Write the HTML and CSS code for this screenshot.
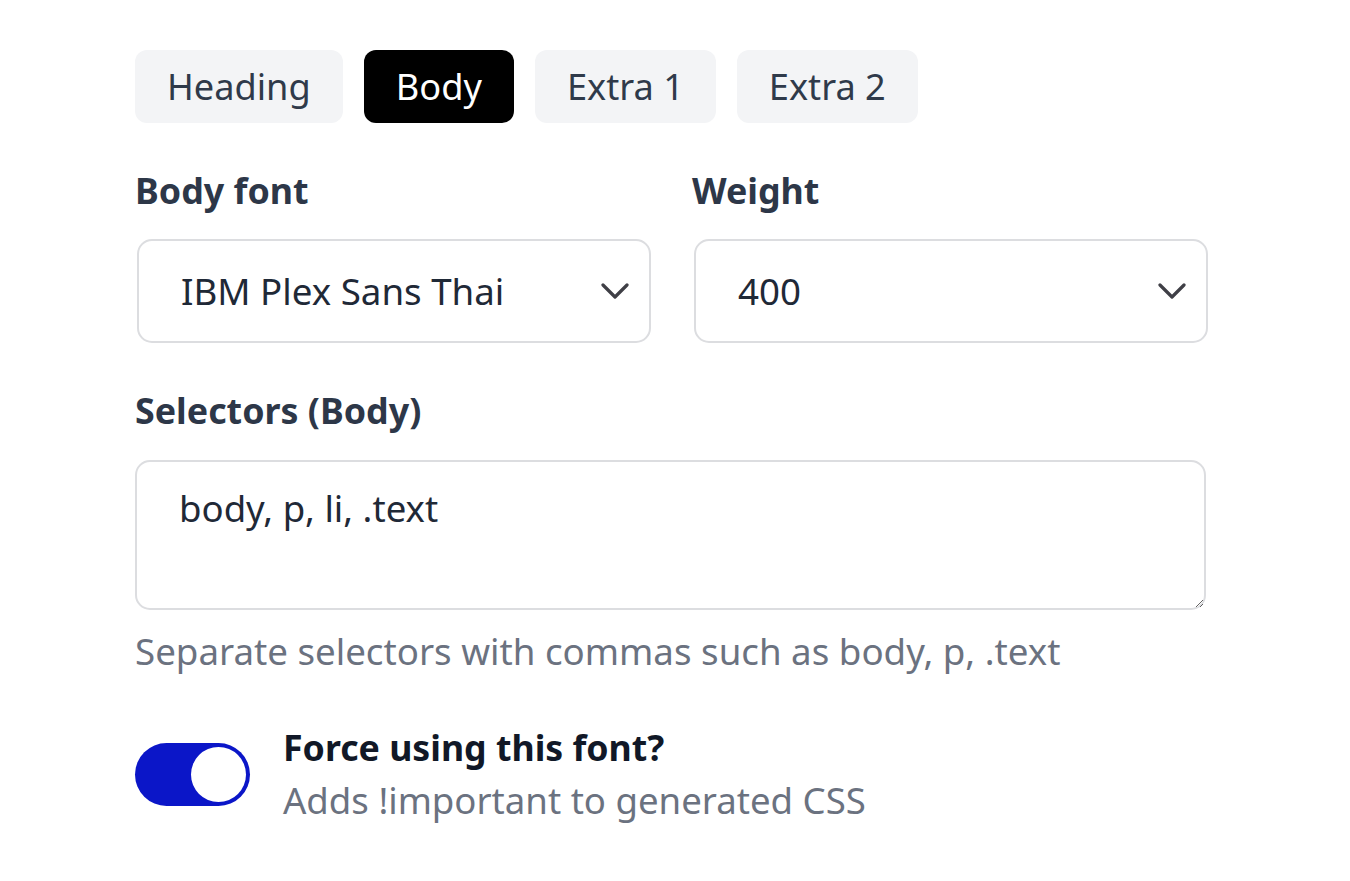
FILE: index.html
```html
<!DOCTYPE html>
<html lang="en">
<head>
<meta charset="utf-8">
<title>Font settings</title>
<link rel="stylesheet" href="styles.css">
</head>
<body>
<div class="panel">
  <div class="tabs">
    <button class="tab">Heading</button>
    <button class="tab active">Body</button>
    <button class="tab">Extra 1</button>
    <button class="tab">Extra 2</button>
  </div>

  <div class="row">
    <div class="field">
      <div class="label">Body font</div>
      <div class="select">
        <span class="select-value">IBM Plex Sans Thai</span>
        <svg class="chevron" viewBox="0 0 28 16" width="28" height="16"><path d="M2 2 L14 14 L26 2" fill="none" stroke="#3f3f46" stroke-width="3.2" stroke-linecap="round" stroke-linejoin="round"/></svg>
      </div>
    </div>
    <div class="field">
      <div class="label">Weight</div>
      <div class="select">
        <span class="select-value">400</span>
        <svg class="chevron" viewBox="0 0 28 16" width="28" height="16"><path d="M2 2 L14 14 L26 2" fill="none" stroke="#3f3f46" stroke-width="3.2" stroke-linecap="round" stroke-linejoin="round"/></svg>
      </div>
    </div>
  </div>

  <div class="label label-selectors">Selectors (Body)</div>
  <textarea class="textarea">body, p, li, .text</textarea>
  <div class="help">Separate selectors with commas such as body, p, .text</div>

  <div class="toggle-row">
    <div class="toggle"><div class="knob"></div></div>
    <div class="toggle-text">
      <div class="toggle-title">Force using this font?</div>
      <div class="toggle-sub">Adds !important to generated CSS</div>
    </div>
  </div>
</div>
</body>
</html>
```

FILE: styles.css
```css
* { box-sizing: border-box; }
html, body { margin: 0; padding: 0; background: #ffffff; }
body {
  font-family: "Noto Sans", "Open Sans", sans-serif;
  color: #1f2937;
}
.panel {
  padding: 50px 0 0 135px;
  width: 1210px;
}
.tabs {
  display: flex;
  gap: 21px;
}
.tab {
  height: 73px;
  padding: 0 32px;
  border: none;
  border-radius: 12px;
  background: #f3f4f6;
  color: #2f3a4a;
  font-family: inherit;
  font-size: 36.2px;
  line-height: 73px;
}
.tab.active {
  background: #000000;
  color: #ffffff;
}
.row {
  display: grid;
  grid-template-columns: 1fr 1fr;
  column-gap: 41px;
  margin-top: 43px;
  width: 1073px;
}
.label {
  font-size: 35.8px;
  font-weight: 700;
  line-height: 48px;
  color: #2d3748;
}
.select {
  margin: 25px 0 0 2px;
  height: 104px;
  border: 2px solid #dcdde0;
  border-radius: 15px;
  display: flex;
  align-items: center;
  justify-content: space-between;
  padding: 0 20px 0 42px;
  background: #fff;
}
.select-value {
  font-size: 36.7px;
  line-height: 48px;
  color: #1f2937;
}
.chevron { display: block; }
.label-selectors {
  margin-top: 43px;
}
.textarea {
  display: block;
  margin-top: 26px;
  width: 1071px;
  height: 150px;
  border: 2px solid #dcdde0;
  border-radius: 15px;
  padding: 22px 42px;
  font-family: inherit;
  font-size: 36.6px;
  line-height: 48px;
  color: #1f2937;
  resize: vertical;
  outline: none;
}
.help {
  margin-top: 17px;
  font-size: 36.7px;
  line-height: 48px;
  color: #6b7280;
}
.toggle-row {
  display: flex;
  align-items: flex-start;
  gap: 33px;
  margin-top: 48px;
}
.toggle {
  margin-top: 20px;
  width: 115px;
  height: 63px;
  border-radius: 32px;
  background: #0b16c8;
  display: flex;
  justify-content: flex-end;
  align-items: center;
  padding: 0 4px;
}
.knob {
  width: 55px;
  height: 55px;
  border-radius: 50%;
  background: #ffffff;
}
.toggle-title {
  font-size: 35.7px;
  font-weight: 700;
  line-height: 48px;
  color: #111827;
}
.toggle-sub {
  margin-top: 5px;
  font-size: 36.6px;
  line-height: 48px;
  color: #6b7280;
}
```
